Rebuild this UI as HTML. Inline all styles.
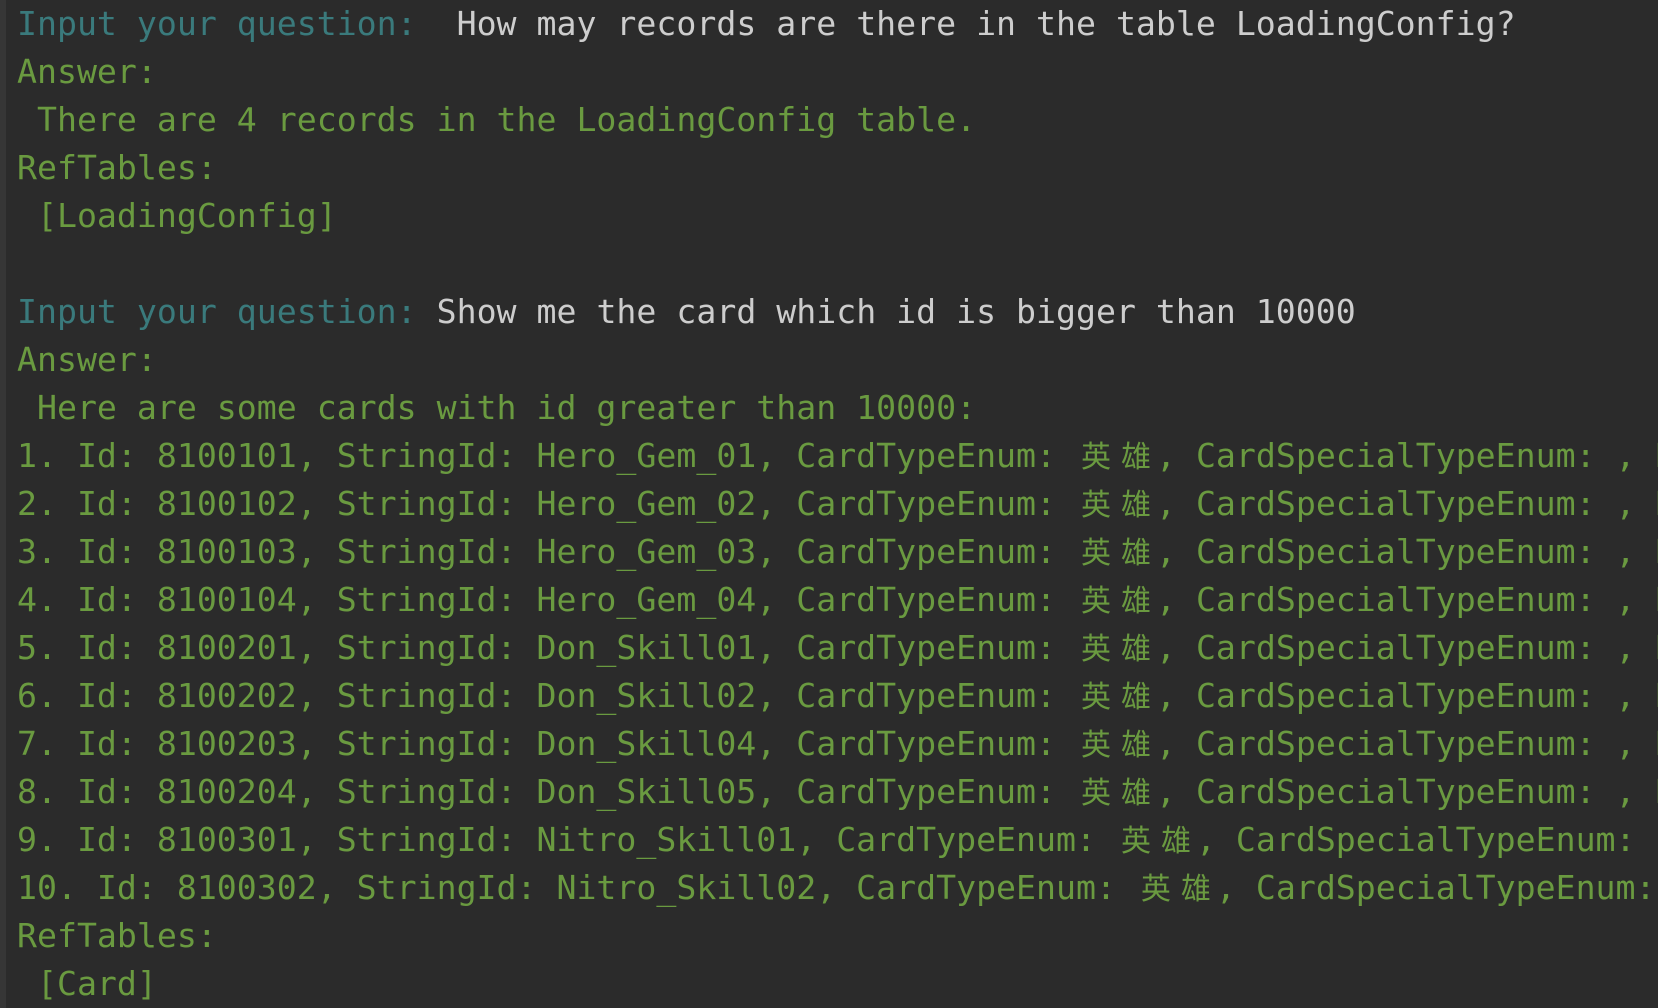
<!DOCTYPE html>
<html><head><meta charset="utf-8"><style>
html,body{margin:0;padding:0;width:1658px;height:1008px;overflow:hidden;background:#2b2b2b;}
#bar{position:absolute;left:0;top:0;width:6px;height:1008px;background:#363636;}
#t{position:absolute;left:17px;top:0px;font-family:"DejaVu Sans Mono","Liberation Mono",monospace;font-size:33.2px;line-height:48px;white-space:pre;color:#6a9a40;}
#t div{height:48px;overflow:visible;}
.q{color:#3a7a7c}.w{color:#cdcdcd}
.c{display:inline-block;width:40px;height:20px;line-height:20px;font-family:"Noto Sans CJK SC",sans-serif;font-size:30px;text-align:center;}
</style></head><body><div id="bar"></div><div id="t"><div><span class="q">Input your question:</span><span class="w">  How may records are there in the table LoadingConfig?</span></div><div>Answer:</div><div> There are 4 records in the LoadingConfig table.</div><div>RefTables:</div><div> [LoadingConfig]</div><div> </div><div><span class="q">Input your question:</span><span class="w"> Show me the card which id is bigger than 10000</span></div><div>Answer:</div><div> Here are some cards with id greater than 10000:</div><div>1. Id: 8100101, StringId: Hero_Gem_01, CardTypeEnum: <span class="c">英</span><span class="c">雄</span>, CardSpecialTypeEnum: , N</div><div>2. Id: 8100102, StringId: Hero_Gem_02, CardTypeEnum: <span class="c">英</span><span class="c">雄</span>, CardSpecialTypeEnum: , N</div><div>3. Id: 8100103, StringId: Hero_Gem_03, CardTypeEnum: <span class="c">英</span><span class="c">雄</span>, CardSpecialTypeEnum: , N</div><div>4. Id: 8100104, StringId: Hero_Gem_04, CardTypeEnum: <span class="c">英</span><span class="c">雄</span>, CardSpecialTypeEnum: , N</div><div>5. Id: 8100201, StringId: Don_Skill01, CardTypeEnum: <span class="c">英</span><span class="c">雄</span>, CardSpecialTypeEnum: , N</div><div>6. Id: 8100202, StringId: Don_Skill02, CardTypeEnum: <span class="c">英</span><span class="c">雄</span>, CardSpecialTypeEnum: , N</div><div>7. Id: 8100203, StringId: Don_Skill04, CardTypeEnum: <span class="c">英</span><span class="c">雄</span>, CardSpecialTypeEnum: , N</div><div>8. Id: 8100204, StringId: Don_Skill05, CardTypeEnum: <span class="c">英</span><span class="c">雄</span>, CardSpecialTypeEnum: , N</div><div>9. Id: 8100301, StringId: Nitro_Skill01, CardTypeEnum: <span class="c">英</span><span class="c">雄</span>, CardSpecialTypeEnum: </div><div>10. Id: 8100302, StringId: Nitro_Skill02, CardTypeEnum: <span class="c">英</span><span class="c">雄</span>, CardSpecialTypeEnum:</div><div>RefTables:</div><div> [Card]</div></div></body></html>
